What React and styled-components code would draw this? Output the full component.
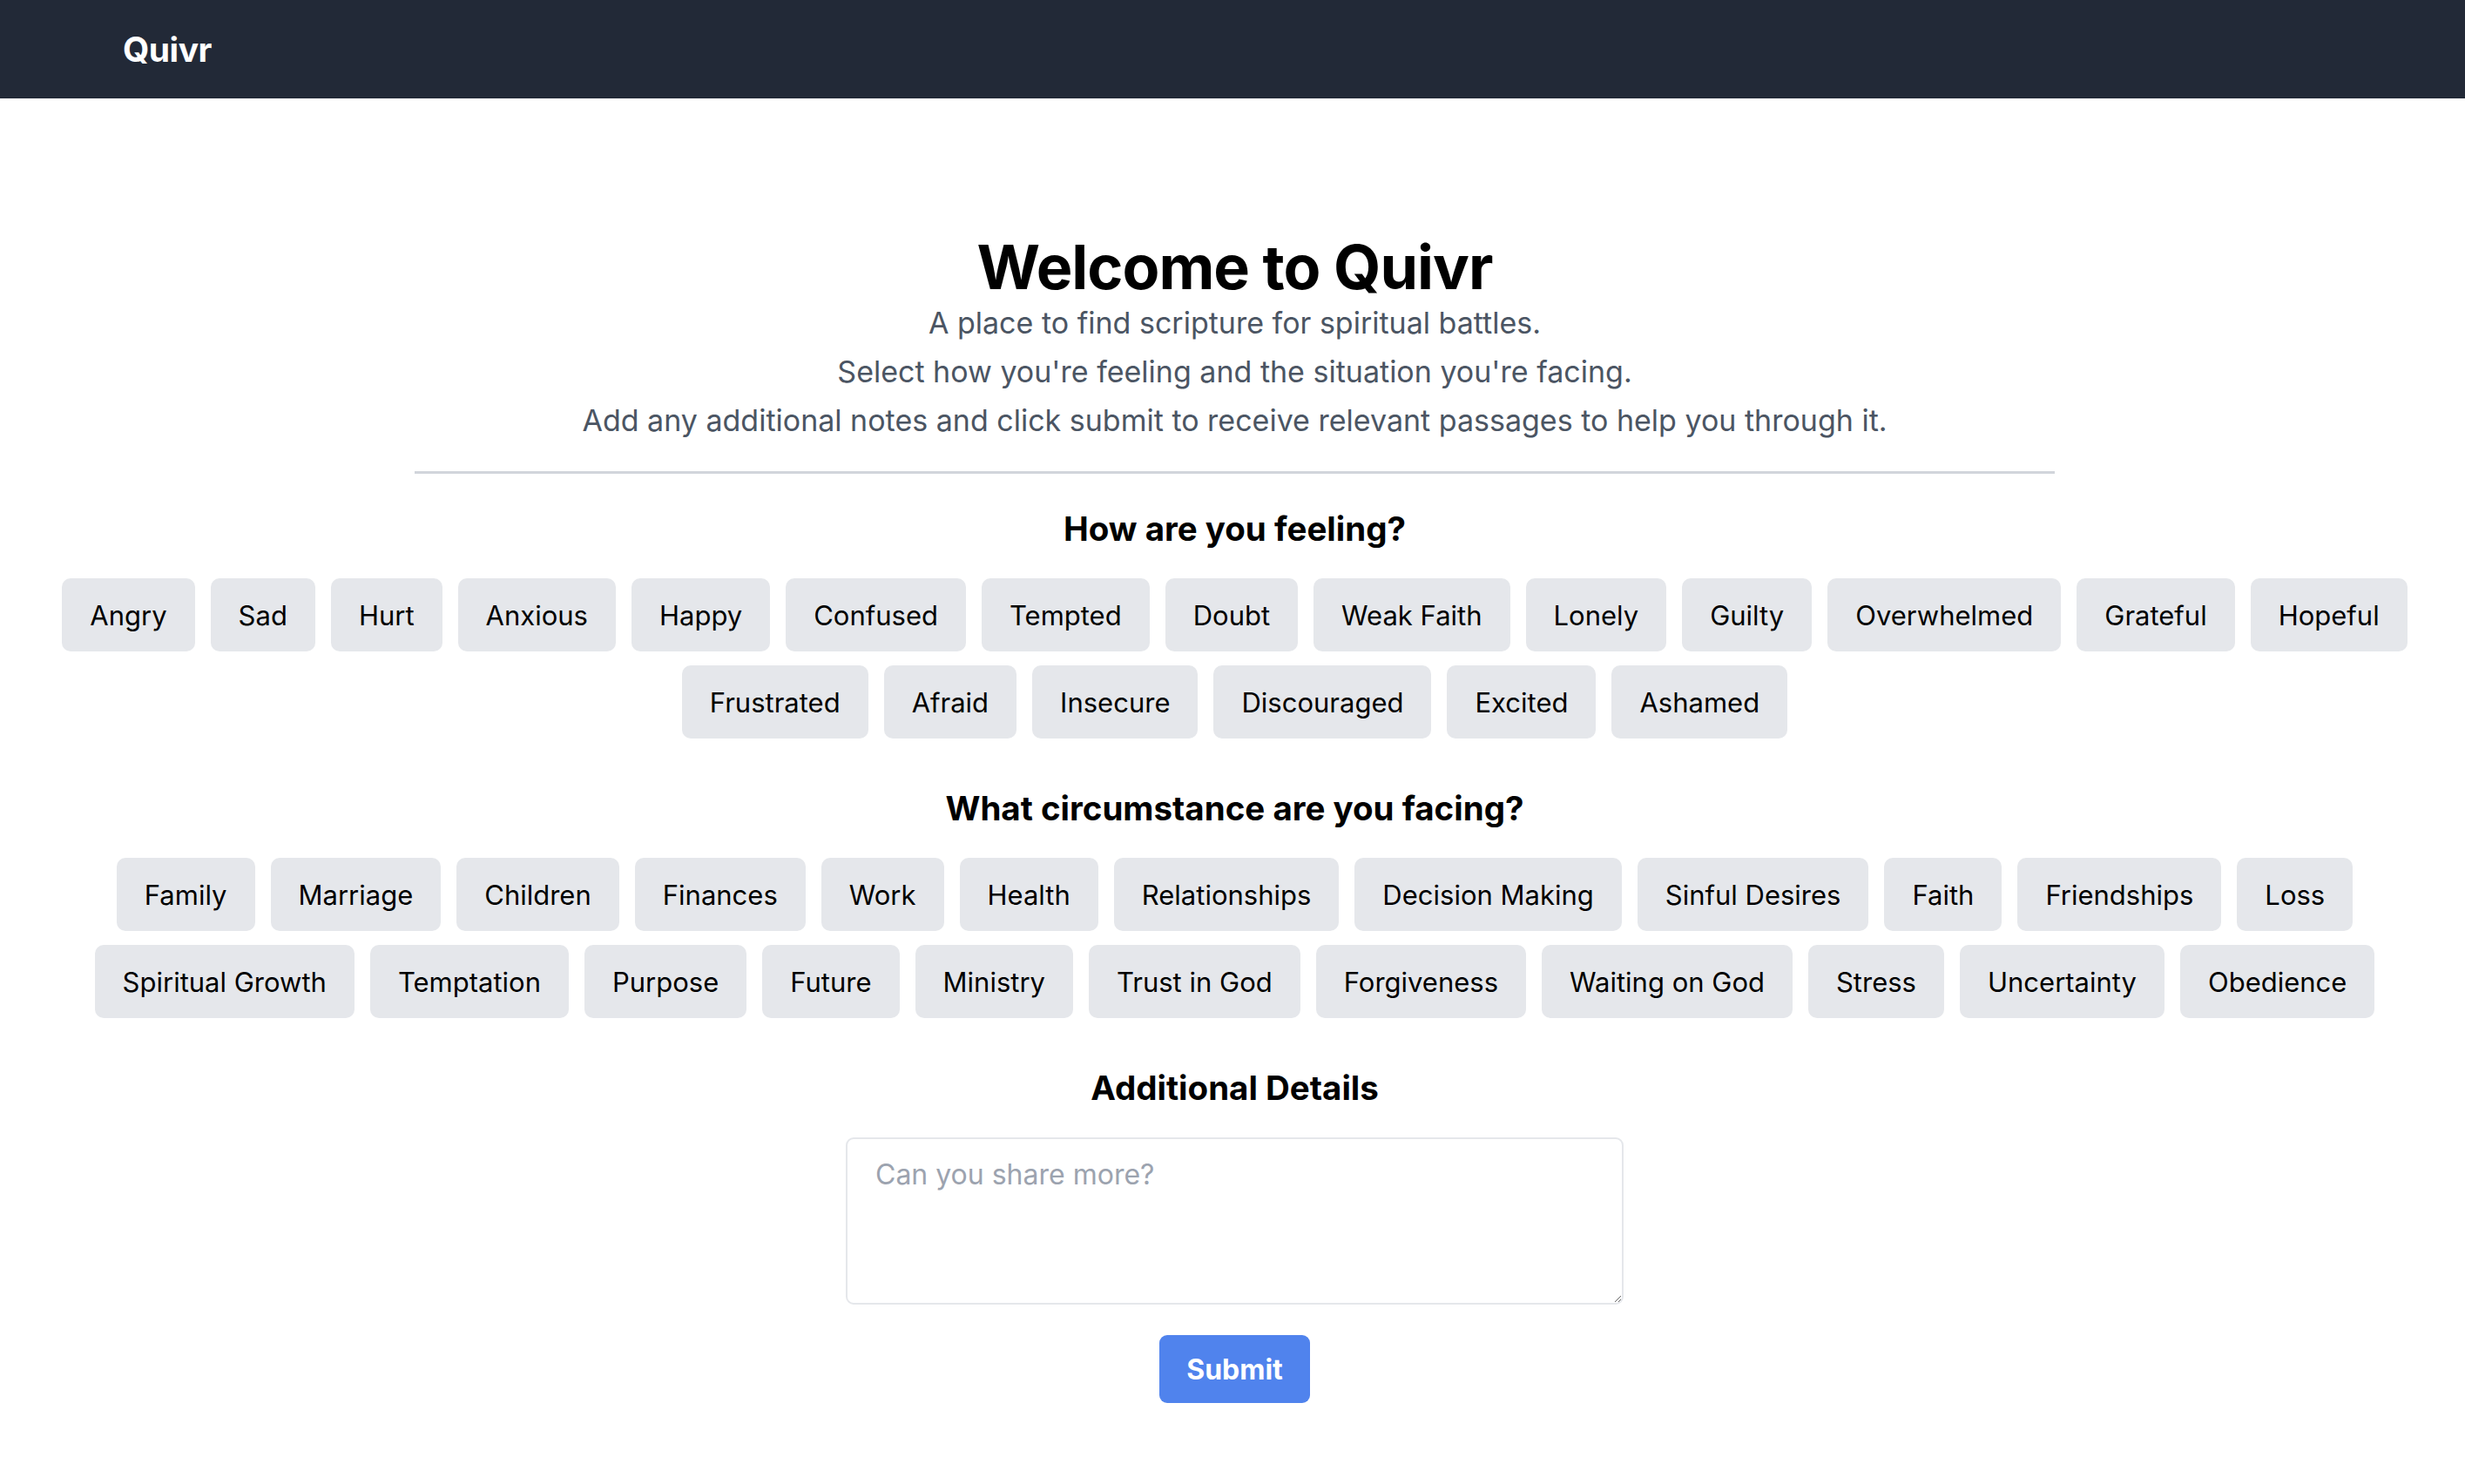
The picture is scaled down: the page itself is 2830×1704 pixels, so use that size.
import React from 'react';
import styled, { createGlobalStyle } from 'styled-components';

const GlobalStyle = createGlobalStyle`
  html, body {
    margin: 0;
    padding: 0;
    background: #ffffff;
    font-family: Inter, "Noto Sans", "Liberation Sans", sans-serif;
  }
  * {
    box-sizing: border-box;
  }
`;

const NavBar = styled.header`
  height: 113px;
  background: #222937;
  display: flex;
  align-items: center;
  padding-left: 141px;
`;

const Brand = styled.span`
  color: #ffffff;
  font-size: 39px;
  font-weight: 700;
  letter-spacing: -0.5px;
`;

const Main = styled.main`
  display: flex;
  flex-direction: column;
  align-items: center;
  padding: 158px 0 80px 5px;
`;

const Title = styled.h1`
  margin: 0;
  font-size: 70px;
  line-height: 72px;
  font-weight: 700;
  color: #000000;
  letter-spacing: -1px;
`;

const Intro = styled.p`
  margin: 0;
  font-size: 34px;
  line-height: 56px;
  color: #4b5563;
  text-align: center;
`;

const Divider = styled.hr`
  width: 66.666%;
  border: none;
  border-top: 3px solid #d1d5db;
  margin: 30px 0 38px;
`;

const Section = styled.section`
  display: flex;
  flex-direction: column;
  align-items: center;
  gap: 16px;
  margin-top: ${(p) => (p.$first ? '0' : '55px')};
`;

const SectionTitle = styled.h2`
  margin: 0 0 16px;
  font-size: 38.5px;
  line-height: 50px;
  font-weight: 700;
  color: #000000;
`;

const TagRow = styled.div`
  display: flex;
  justify-content: center;
  gap: 18px;
  white-space: nowrap;
`;

const Tag = styled.button`
  height: 84px;
  padding: 0 32px;
  border: none;
  border-radius: 10px;
  background: #e5e7eb;
  color: #000000;
  font-family: inherit;
  font-size: 31px;
  cursor: pointer;
`;

const Notes = styled.textarea`
  width: 893px;
  height: 192px;
  padding: 17px 32px;
  border: 2px solid #e5e7eb;
  border-radius: 9px;
  font-family: inherit;
  font-size: 32px;
  line-height: 48px;
  color: #111827;
  outline: none;
  &::placeholder {
    color: #9ca3af;
  }
`;

const SubmitButton = styled.button`
  margin-top: 35px;
  height: 78px;
  padding: 0 31px;
  border: none;
  border-radius: 9px;
  background: #5083ed;
  color: #ffffff;
  font-family: inherit;
  font-size: 32px;
  font-weight: 700;
  cursor: pointer;
`;

const feelings = [
  ['Angry', 'Sad', 'Hurt', 'Anxious', 'Happy', 'Confused', 'Tempted', 'Doubt', 'Weak Faith', 'Lonely', 'Guilty', 'Overwhelmed', 'Grateful', 'Hopeful'],
  ['Frustrated', 'Afraid', 'Insecure', 'Discouraged', 'Excited', 'Ashamed'],
];

const circumstances = [
  ['Family', 'Marriage', 'Children', 'Finances', 'Work', 'Health', 'Relationships', 'Decision Making', 'Sinful Desires', 'Faith', 'Friendships', 'Loss'],
  ['Spiritual Growth', 'Temptation', 'Purpose', 'Future', 'Ministry', 'Trust in God', 'Forgiveness', 'Waiting on God', 'Stress', 'Uncertainty', 'Obedience'],
];

function TagGroup({ rows }) {
  return rows.map((row, i) => (
    <TagRow key={i}>
      {row.map((label) => (
        <Tag key={label}>{label}</Tag>
      ))}
    </TagRow>
  ));
}

export default function App() {
  return (
    <>
      <GlobalStyle />
      <NavBar>
        <Brand>Quivr</Brand>
      </NavBar>
      <Main>
        <Title>Welcome to Quivr</Title>
        <Intro>A place to find scripture for spiritual battles.</Intro>
        <Intro>Select how you're feeling and the situation you're facing.</Intro>
        <Intro>Add any additional notes and click submit to receive relevant passages to help you through it.</Intro>
        <Divider />

        <Section $first>
          <SectionTitle>How are you feeling?</SectionTitle>
          <TagGroup rows={feelings} />
        </Section>

        <Section>
          <SectionTitle>What circumstance are you facing?</SectionTitle>
          <TagGroup rows={circumstances} />
        </Section>

        <Section>
          <SectionTitle>Additional Details</SectionTitle>
          <Notes placeholder="Can you share more?" />
        </Section>

        <SubmitButton>Submit</SubmitButton>
      </Main>
    </>
  );
}
